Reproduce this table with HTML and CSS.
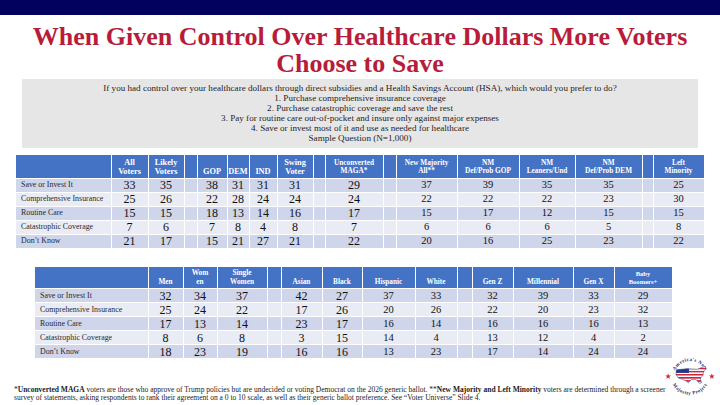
FILE: index.html
```html
<!DOCTYPE html>
<html>
<head>
<meta charset="utf-8">
<link rel="stylesheet" href="styles.css">
</head>
<body>
<div class="slide">
  <div class="topbar"></div>
  <h1 class="title">When Given Control Over Healthcare Dollars More Voters<br>Choose to Save</h1>
  <div class="question">
    <p>If you had control over your healthcare dollars through direct subsidies and a Health Savings Account (HSA), which would you prefer to do?</p>
    <p>1. Purchase comprehensive insurance coverage</p>
    <p>2. Purchase catastrophic coverage and save the rest</p>
    <p>3. Pay for routine care out-of-pocket and insure only against major expenses</p>
    <p>4. Save or invest most of it and use as needed for healthcare</p>
    <p>Sample Question (N=1,000)</p>
  </div>

  <table class="data t1">
    <colgroup>
      <col style="width:95px"><col style="width:37px"><col style="width:36px"><col style="width:13px">
      <col style="width:30px"><col style="width:22px"><col style="width:28px"><col style="width:36px">
      <col style="width:12px"><col style="width:58px"><col style="width:13px"><col style="width:61px">
      <col style="width:62px"><col style="width:56px"><col style="width:67px"><col style="width:11px">
      <col style="width:51px">
    </colgroup>
    <thead>
      <tr>
        <th></th><th>All<br>Voters</th><th>Likely<br>Voters</th><th></th>
        <th>GOP</th><th>DEM</th><th>IND</th><th>Swing<br>Voter</th><th></th>
        <th class="sm">Unconverted<br>MAGA*</th><th></th>
        <th class="sm">New Majority<br>All**</th><th class="sm">NM<br>Def/Prob GOP</th>
        <th class="sm">NM<br>Leaners/Und</th><th class="sm">NM<br>Def/Prob DEM</th><th></th>
        <th class="sm">Left<br>Minority</th>
      </tr>
    </thead>
    <tbody>
      <tr class="dk"><td class="lbl">Save or Invest It</td><td>33</td><td>35</td><td></td><td>38</td><td>31</td><td>31</td><td>31</td><td></td><td>29</td><td></td><td class="s">37</td><td class="s">39</td><td class="s">35</td><td class="s">35</td><td></td><td class="s">25</td></tr>
      <tr class="lt"><td class="lbl">Comprehensive Insurance</td><td>25</td><td>26</td><td></td><td>22</td><td>28</td><td>24</td><td>24</td><td></td><td>24</td><td></td><td class="s">22</td><td class="s">22</td><td class="s">22</td><td class="s">23</td><td></td><td class="s">30</td></tr>
      <tr class="dk"><td class="lbl">Routine Care</td><td>15</td><td>15</td><td></td><td>18</td><td>13</td><td>14</td><td>16</td><td></td><td>17</td><td></td><td class="s">15</td><td class="s">17</td><td class="s">12</td><td class="s">15</td><td></td><td class="s">15</td></tr>
      <tr class="lt"><td class="lbl">Catastrophic Coverage</td><td>7</td><td>6</td><td></td><td>7</td><td>8</td><td>4</td><td>8</td><td></td><td>7</td><td></td><td class="s">6</td><td class="s">6</td><td class="s">6</td><td class="s">5</td><td></td><td class="s">8</td></tr>
      <tr class="dk"><td class="lbl">Don’t Know</td><td>21</td><td>17</td><td></td><td>15</td><td>21</td><td>27</td><td>21</td><td></td><td>22</td><td></td><td class="s">20</td><td class="s">16</td><td class="s">25</td><td class="s">23</td><td></td><td class="s">22</td></tr>
    </tbody>
  </table>

  <table class="data t2">
    <colgroup>
      <col style="width:113px"><col style="width:35px"><col style="width:34px"><col style="width:50px">
      <col style="width:14px"><col style="width:41px"><col style="width:40px"><col style="width:53px">
      <col style="width:42px"><col style="width:15px"><col style="width:41px"><col style="width:60px">
      <col style="width:41px"><col style="width:58px">
    </colgroup>
    <thead>
      <tr>
        <th></th><th class="sm">Men</th><th class="sm">Wom<br>en</th><th class="sm">Single<br>Women</th><th></th>
        <th class="sm">Asian</th><th class="sm">Black</th><th class="sm">Hispanic</th><th class="sm">White</th><th></th>
        <th class="sm">Gen Z</th><th class="sm">Millennial</th><th class="sm">Gen X</th><th class="xs">Baby<br>Boomers+</th>
      </tr>
    </thead>
    <tbody>
      <tr class="dk"><td class="lbl">Save or Invest It</td><td>32</td><td>34</td><td>37</td><td></td><td>42</td><td>27</td><td class="s">37</td><td class="s">33</td><td></td><td class="s">32</td><td class="s">39</td><td class="s">33</td><td class="s">29</td></tr>
      <tr class="lt"><td class="lbl">Comprehensive Insurance</td><td>25</td><td>24</td><td>22</td><td></td><td>17</td><td>26</td><td class="s">20</td><td class="s">26</td><td></td><td class="s">22</td><td class="s">20</td><td class="s">23</td><td class="s">32</td></tr>
      <tr class="dk"><td class="lbl">Routine Care</td><td>17</td><td>13</td><td>14</td><td></td><td>23</td><td>17</td><td class="s">16</td><td class="s">14</td><td></td><td class="s">16</td><td class="s">16</td><td class="s">16</td><td class="s">13</td></tr>
      <tr class="lt"><td class="lbl">Catastrophic Coverage</td><td>8</td><td>6</td><td>8</td><td></td><td>3</td><td>15</td><td class="s">14</td><td class="s">4</td><td></td><td class="s">13</td><td class="s">12</td><td class="s">4</td><td class="s">2</td></tr>
      <tr class="dk"><td class="lbl">Don’t Know</td><td>18</td><td>23</td><td>19</td><td></td><td>16</td><td>16</td><td class="s">13</td><td class="s">23</td><td></td><td class="s">17</td><td class="s">14</td><td class="s">24</td><td class="s">24</td></tr>
    </tbody>
  </table>

  <p class="footnote">*<b>Unconverted MAGA</b> voters are those who approve of Trump policies but are undecided or voting Democrat on the 2026 generic ballot. **<b>New Majority and Left Minority</b> voters are determined through a screener<br>survey of statements, asking respondents to rank their agreement on a 0 to 10 scale, as well as their generic ballot preference. See “Voter Universe” Slide 4.</p>

  <svg class="logo" viewBox="0 0 100 100" width="52" height="52" aria-label="America's New Majority Project">
    <defs>
      <path id="arcTop" d="M 19 54 A 31 31 0 0 1 81 54"/>
      <path id="arcBot" d="M 12 50 A 38 38 0 0 0 88 50"/>
      <pattern id="stripes" width="4" height="6" patternUnits="userSpaceOnUse">
        <rect width="4" height="3" fill="#d0243a"/>
        <rect y="3" width="4" height="3" fill="#ffffff"/>
      </pattern>
      <clipPath id="usa">
        <path d="M24 40 L44 38 L64 39 L74 35 L79 33 L81 38 L76 44 L75 51 L70 56 L72 65 L68 66 L62 59 L52 59 L47 65 L42 61 L35 58 L28 56 L23 49 Z"/>
      </clipPath>
    </defs>
    <circle cx="50" cy="50" r="48" fill="#fff"/>
    <text class="logo-top"><textPath href="#arcTop" startOffset="50%" text-anchor="middle">America's New</textPath></text>
    <text class="logo-bot"><textPath href="#arcBot" startOffset="50%" text-anchor="middle">Majority Project</textPath></text>
    <g clip-path="url(#usa)">
      <rect x="18" y="30" width="70" height="40" fill="url(#stripes)"/>
      <rect x="18" y="30" width="30" height="16" fill="#233a8c"/>
    </g>
    <path d="M24 40 L44 38 L64 39 L74 35 L79 33 L81 38 L76 44 L75 51 L70 56 L72 65 L68 66 L62 59 L52 59 L47 65 L42 61 L35 58 L28 56 L23 49 Z" fill="none" stroke="#233a8c" stroke-width="1"/>
    <polygon points="8,47 9.5,51 13.5,51 10.3,53.5 11.5,57.5 8,55 4.5,57.5 5.7,53.5 2.5,51 6.5,51" fill="#d0243a"/>
    <polygon points="92,47 93.5,51 97.5,51 94.3,53.5 95.5,57.5 92,55 88.5,57.5 89.7,53.5 86.5,51 90.5,51" fill="#d0243a"/>
  </svg>
</div>
</body>
</html>
```
FILE: styles.css
```css
* { box-sizing: border-box; }
html, body { margin: 0; padding: 0; }
body { width: 720px; height: 405px; overflow: hidden; background: #fff; font-family: "Liberation Serif", "DejaVu Serif", serif; }
.slide { position: relative; width: 720px; height: 405px; }
.topbar { height: 15px; background: #02025e; }
.title {
  margin: 8px 0 0;
  text-align: center;
  color: #b71d3a;
  font-size: 26px;
  line-height: 27px;
  font-weight: bold;
}
.question {
  margin: 2px 22px 0;
  background: #e7e6e6;
  padding: 4px 0 5px;
  text-align: center;
  color: #1e1e1e;
  font-size: 9.1px;
  line-height: 10px;
}
.question p { margin: 0; }
.data {
  border-collapse: collapse;
  table-layout: fixed;
}
.t1 { width: 688px; margin: 7px 0 0 16px; }
.t2 { width: 637px; margin: 18px 0 0 35px; }
.data th {
  background: #4472c4;
  color: #fff;
  font-weight: bold;
  font-size: 8.3px;
  line-height: 9px;
  text-align: center;
  vertical-align: bottom;
  padding: 0 0 2px;
  border: 1px solid #fff;
  border-top: 0;
}
.t1 thead tr { height: 23px; }
.t2 thead tr { height: 22px; }
.data th.sm { font-size: 7.3px; line-height: 8.5px; }
.data th.xs { font-size: 6.6px; line-height: 8px; }
.data td {
  border: 1px solid #fff;
  height: 14px;
  padding: 0;
  text-align: center;
  vertical-align: middle;
  font-size: 12px;
  line-height: 12px;
  color: #111;
}
.data td.s { font-size: 10.5px; }
.data td.lbl {
  text-align: left;
  padding-left: 5px;
  font-size: 7.9px;
  color: #2a2a2a;
}
.dk td { background: #cfd5ea; }
.lt td { background: #e9ebf5; }
.data tr > :first-child { border-left: 0; }
.footnote {
  margin: 27px 0 0 14px;
  font-size: 7.5px;
  line-height: 8px;
  color: #222;
  white-space: nowrap;
}
.logo { position: absolute; left: 664px; top: 349px; }
.logo-top { font-size: 9.5px; font-weight: bold; fill: #1c2b6e; letter-spacing: 0.8px; }
.logo-bot { font-size: 9.5px; font-weight: bold; fill: #1c2b6e; letter-spacing: 0.8px; }
```
